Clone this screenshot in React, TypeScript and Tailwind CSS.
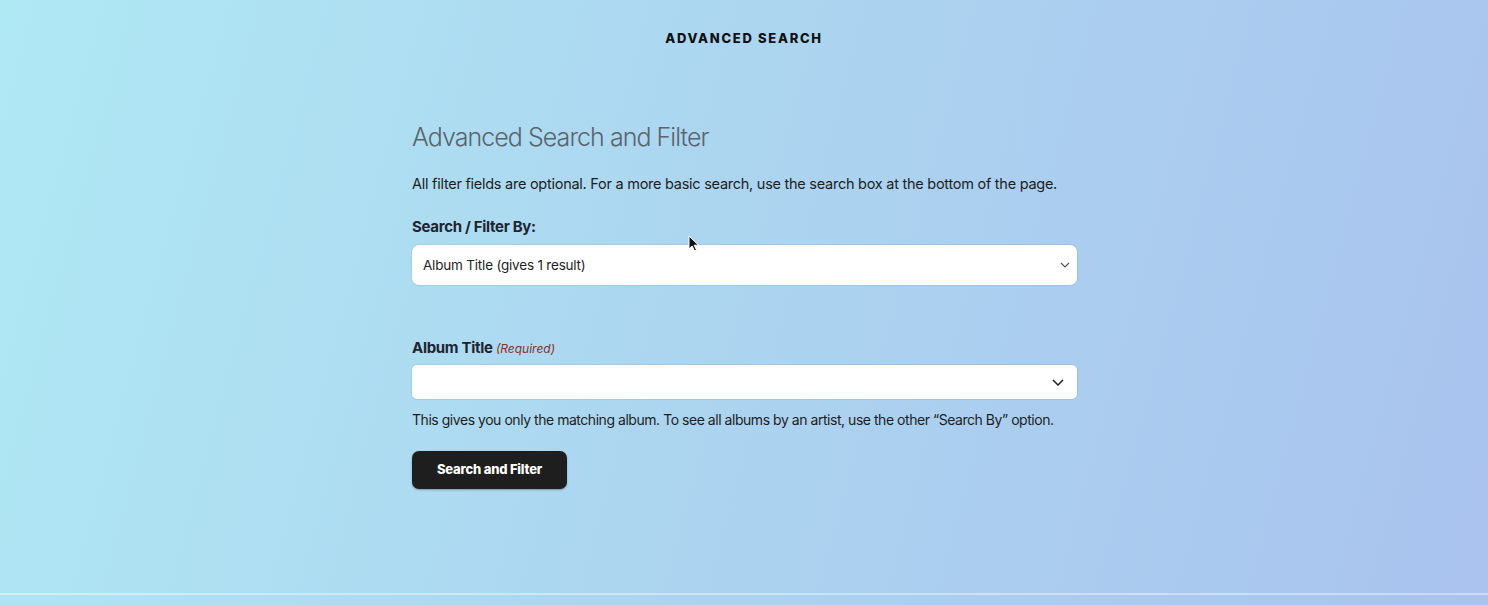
export default function App() {
  return (
    <div
      className="relative w-full h-[605px] overflow-hidden bg-[linear-gradient(105deg,#afe9f4_0%,#acd6f0_45%,#a9c3ee_100%)] text-[#1e1e1e]"
      style={{ fontFamily: "Inter, 'Open Sans', sans-serif" }}
    >
      <header className="pt-[30px] flex justify-center">
        <h1 className="text-[13px] font-extrabold tracking-[0.13em] uppercase text-[#111] leading-4">
          Advanced Search
        </h1>
      </header>

      <main className="mx-auto w-[666px] pt-[77px] pl-px">
        <h2 className="text-[25px] font-light tracking-[-0.95px] text-[#5a646c] leading-7">
          Advanced Search and Filter
        </h2>
        <p className="mt-[23px] text-[14.5px] tracking-[-0.26px] leading-5 whitespace-nowrap">
          All filter fields are optional. For a more basic search, use the search box at the bottom of the page.
        </p>

        <label className="block mt-[23px] text-[15px] font-bold tracking-[-0.3px] leading-5 text-[#1c2530]">
          Search / Filter By:
        </label>
        <div className="mt-[8px] h-[40px] rounded-[7px] bg-white shadow-[0_0_0_1px_rgba(0,0,0,0.06)] flex items-center justify-between pl-[11px] pr-[7px]">
          <span className="text-[13.5px] tracking-[-0.2px]">Album Title (gives 1 result)</span>
          <svg width="10" height="6" viewBox="0 0 10 6" fill="none" stroke="#555" strokeWidth="1.2">
            <path d="M1 1l4 4 4-4" />
          </svg>
        </div>

        <label className="block mt-[53px] text-[15px] font-bold tracking-[-0.3px] leading-5 text-[#1c2530]">
          Album Title{" "}
          <span className="text-[12px] font-normal italic tracking-normal text-[#8b2f1e]">(Required)</span>
        </label>
        <div className="mt-[6px] h-[34px] rounded-[5px] bg-white shadow-[0_0_0_1px_rgba(0,0,0,0.06)] flex items-center justify-end pr-[13px]">
          <svg width="12" height="7" viewBox="0 0 12 7" fill="none" stroke="#222" strokeWidth="1.5">
            <path d="M1 1l5 5 5-5" />
          </svg>
        </div>
        <p className="mt-[11px] text-[14px] tracking-[-0.46px] leading-5 whitespace-nowrap">
          This gives you only the matching album. To see all albums by an artist, use the other “Search By” option.
        </p>

        <button className="mt-[21px] h-[38px] w-[155px] rounded-[7px] bg-[#1e1e1e] text-white text-[13px] font-extrabold tracking-[-0.2px] shadow-[0_1px_2px_rgba(0,0,0,0.3)]">
          Search and Filter
        </button>
      </main>

      <div className="absolute left-0 right-0 top-[593px] h-[2px] bg-white/40" />

      <svg className="absolute left-[688px] top-[235px]" width="11" height="17" viewBox="0 0 11 17">
        <path d="M1 1v13l3.2-3 2.3 5 2-1-2.3-4.8H10.5z" fill="#111" stroke="#fff" strokeWidth="1" />
      </svg>
    </div>
  );
}
